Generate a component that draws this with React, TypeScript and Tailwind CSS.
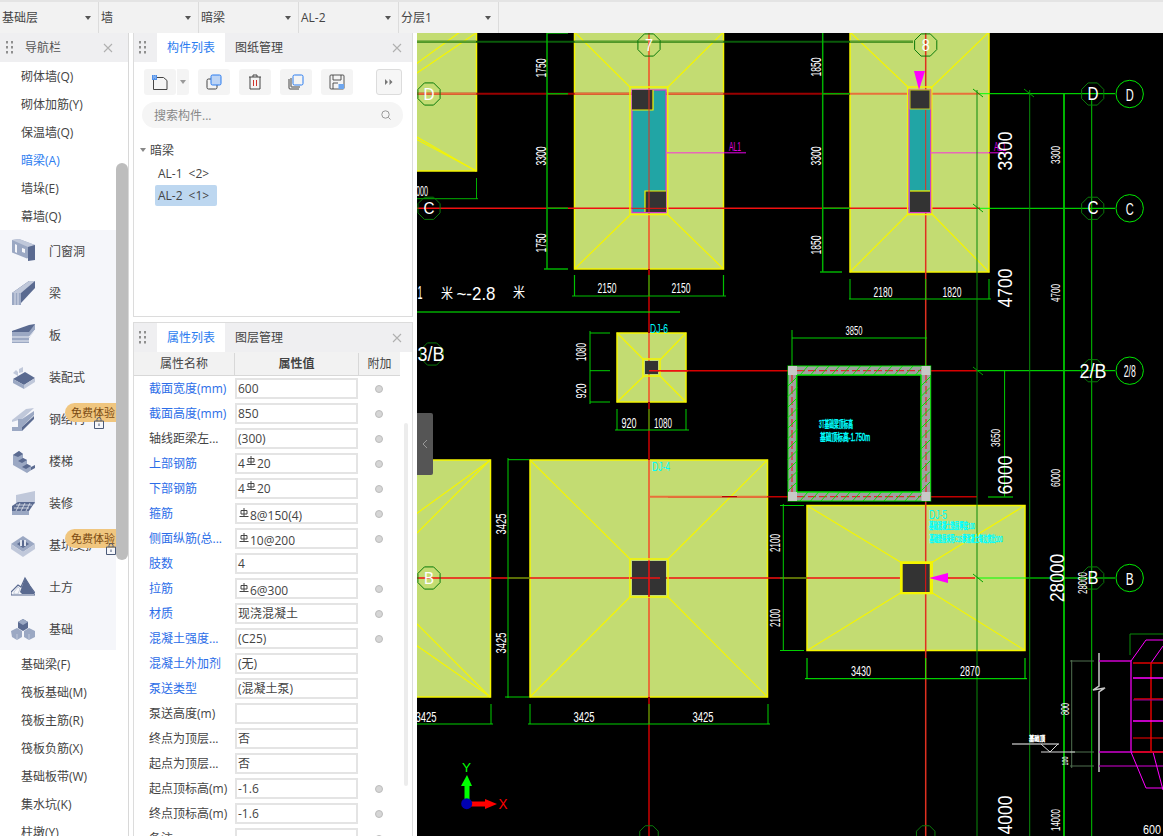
import type { ReactNode } from 'react'

const selects = ['基础层', '墙', '暗梁', 'AL-2', '分层1']

const topItems = ['砌体墙(Q)', '砌体加筋(Y)', '保温墙(Q)', '暗梁(A)', '墙垛(E)', '幕墙(Q)']
const groups = ['门窗洞', '梁', '板', '装配式', '钢结构', '楼梯', '装修', '基坑支护', '土方', '基础']
const bottomItems = ['基础梁(F)', '筏板基础(M)', '筏板主筋(R)', '筏板负筋(X)', '基础板带(W)', '集水坑(K)', '柱墩(Y)']

const rows = [
  { name: '截面宽度(mm)', value: '600', blue: true, dot: true },
  { name: '截面高度(mm)', value: '850', blue: true, dot: true },
  { name: '轴线距梁左...', value: '(300)', dot: true },
  { name: '上部钢筋', value: '4|20', blue: true, dot: true },
  { name: '下部钢筋', value: '4|20', blue: true, dot: true },
  { name: '箍筋', value: '|8@150(4)', blue: true, dot: true },
  { name: '侧面纵筋(总...', value: '|10@200', blue: true, dot: true },
  { name: '肢数', value: '4', blue: true },
  { name: '拉筋', value: '|6@300', blue: true, dot: true },
  { name: '材质', value: '现浇混凝土', blue: true, dot: true },
  { name: '混凝土强度...', value: '(C25)', blue: true, dot: true },
  { name: '混凝土外加剂', value: '(无)', blue: true },
  { name: '泵送类型', value: '(混凝土泵)', blue: true },
  { name: '泵送高度(m)', value: '' },
  { name: '终点为顶层...', value: '否' },
  { name: '起点为顶层...', value: '否' },
  { name: '起点顶标高(m)', value: '-1.6', dot: true },
  { name: '终点顶标高(m)', value: '-1.6', dot: true },
  { name: '备注', value: '', dot: true },
]

function Grip() {
  return (
    <svg width="8" height="14" viewBox="0 0 8 14" fill="#8f8f8f">
      {[0, 5, 10].map((y) => (
        <g key={y}>
          <rect x="0" y={y} width="2" height="2.5" />
          <rect x="5" y={y} width="2" height="2.5" />
        </g>
      ))}
    </svg>
  )
}

function Close() {
  return (
    <svg width="10" height="10" viewBox="0 0 10 10" stroke="#b0b0b0" strokeWidth="1.1">
      <path d="M1 1l8 8M9 1l-8 8" />
    </svg>
  )
}

function RebarMark() {
  return (
    <svg width="10" height="10" viewBox="0 0 10 10" fill="none" stroke="#444" strokeWidth="1" className="mb-[5px] mx-[1px] inline-block">
      <path d="M2 2.5h6v3.500h-6zM5 0v8.500M0.500 8.500h9" />
    </svg>
  )
}

function NavIcon({ name }: { name: string }) {
  const l = '#c0c8da'
  const m = '#9ba8c3'
  const d = '#5a6a90'
  const icons: Record<string, ReactNode> = {
    门窗洞: (
      <>
        <path d="M1 1l7-1 16 6v9l-8 4.500-15-6z" fill={m} />
        <path d="M1 1l7-1 16 6-7 2z" fill={l} />
        <path d="M17 8l7-2v15l-7 1z" fill={d} />
        <path d="M4 5l2 1v8l-2-1zM11 9l3 1v4l-3-1z" fill="#f5f6fa" />
      </>
    ),
    梁: (
      <>
        <path d="M1 12l17-12 6 0v7l-14 15H1z" fill={d} />
        <path d="M1 12l17-12 6 0-14 12z" fill={l} />
        <path d="M1 12h9v12H1z" fill={m} />
        <path d="M4 12v12M7 12v12" stroke="#f5f6fa" strokeWidth=".7" />
      </>
    ),
    板: (
      <>
        <path d="M1 8l18-4 5-3v6l-6 8v5H1z" fill={m} />
        <path d="M1 8L18 2l6-1-6 8H1z" fill={d} />
        <path d="M1 14h17M1 18h17M18 14l6-7M18 18l6-7" stroke="#f5f6fa" strokeWidth=".9" />
      </>
    ),
    装配式: (
      <>
        <path d="M2 8l3-3 2 2v4zM8 4l4-2v5l-4 1z" fill={l} />
        <path d="M2 14l12-7 10 6-11 7z" fill={d} />
        <path d="M2 14l11 6v4L2 18z" fill={m} />
        <path d="M13 20l11-7v4l-11 7z" fill={l} />
      </>
    ),
    钢结构: (
      <>
        <path d="M1 15l10-3 12-11-8 1L1 13z" fill={l} />
        <path d="M1 20h10v4H1z" fill={m} />
        <path d="M7 12l4 0 12-8v4L11 20H7z" fill={m} />
        <path d="M11 20L23 9v3L11 24z" fill={d} />
      </>
    ),
    楼梯: (
      <>
        <path d="M2 6l6-4 4 3v4l4 2v4l4 2v4l-4 3L2 16z" fill={m} />
        <path d="M8 2l4 3-5 3-5-2zM12 9l4 2-5 3-4-2zM16 15l4 2-5 3-4-2z" fill={d} />
        <path d="M15 24l9-5v-3l-4 2v3z" fill={d} />
      </>
    ),
    装修: (
      <>
        <path d="M5 4L24 0v13L5 15z" fill={l} />
        <path d="M1 15l6-4h17l-6 9H1z" fill={d} />
        <path d="M1 20h17v4H1z" fill={m} />
        <path d="M5 14h16M3 17h15M9 12l-4 8M14 12l-4 8M19 12l-4 8" stroke="#f5f6fa" strokeWidth=".7" />
      </>
    ),
    基坑支护: (
      <>
        <path d="M0 11L12 3l12 8-12 8z" fill={m} />
        <path d="M0 11v5l12 8v-5zM24 11v5l-12 8v-5z" fill={l} />
        <path d="M6 11l6-4 6 4-6 4z" fill={d} />
        <path d="M9 7h2v6H9zM13 7h2v6h-2z" fill="#dfe4ee" />
      </>
    ),
    土方: (
      <>
        <path d="M0 17l7-7 3 2 4-9 5 8 5 7v2H0z" fill="none" stroke={d} strokeWidth="1.200" />
        <path d="M9 17l5-14 5 8 4 6v2H11z" fill={d} />
        <path d="M3 17l4-5 2 2-2 5H3z" fill="#f5f6fa" stroke={m} strokeWidth=".5" />
      </>
    ),
    基础: (
      <>
        <path d="M7 5l5-3 5 3v6l-5 3-5-3z" fill={d} />
        <path d="M7 5l5 3 5-3-5-3z" fill={m} />
        <path d="M0 14l6-3 5 3v6l-5 3-5-3z" fill={m} />
        <path d="M13 14l5-3 6 3v6l-6 3-5-3z" fill={m} />
        <path d="M6 17v6M18 17v6" stroke={l} />
      </>
    ),
  }
  return (
    <svg width="24" height="24" viewBox="0 0 24 24" className="shrink-0">
      {icons[name]}
    </svg>
  )
}

function Badge({ top }: { top: number }) {
  return (
    <div className="absolute left-[65px] z-10 h-[19px] w-[51px] rounded-l-full bg-[#f0c67f] pl-[6px] text-[11px] leading-[19px] text-[#7a4a12]" style={{ top }}>
      <span className="whitespace-nowrap">免费体验</span>
    </div>
  )
}

function Lock({ left, top }: { left: number; top: number }) {
  return (
    <svg width="10" height="12" viewBox="0 0 10 12" fill="none" stroke="#4b5a78" className="absolute z-20" style={{ left, top }}>
      <path d="M3 4V2.500a2 2 0 014 0V4M.5 4h9v7.500h-9zM5 6.500v2.500" />
    </svg>
  )
}

function NavBar() {
  return (
    <aside className="relative h-[803px] w-[129px] shrink-0 overflow-hidden border-r border-[#d8d8d8] bg-white text-[12px] text-[#444]">
      <div className="flex h-[29px] items-center bg-[#efeff1] pl-[6px] pr-[15px]">
        <Grip />
        <span className="ml-[11px] flex-1 text-[#555]">导航栏</span>
        <Close />
      </div>
      <div className="pr-3">
        {topItems.map((t) => (
          <div key={t} className={`h-[28px] pl-[21px] leading-[30px] ${t === '暗梁(A)' ? 'text-[#2b7cf0]' : ''}`}>
            {t}
          </div>
        ))}
      </div>
      <div className="mr-3 bg-[#f5f6fa]">
        {groups.map((t) => (
          <div key={t} className="flex h-[42px] items-center pl-[11px]">
            <NavIcon name={t} />
            <span className="ml-[14px] whitespace-nowrap pt-[2px] text-[#444]">{t}</span>
          </div>
        ))}
      </div>
      <div className="pr-3">
        {bottomItems.map((t) => (
          <div key={t} className="h-[28px] pl-[21px] leading-[30px]">
            {t}
          </div>
        ))}
      </div>
      <div className="absolute left-[116px] top-[130px] h-[397px] w-3 rounded-full bg-[#bdbdbd]" />
      <Badge top={370} />
      <Lock left={94} top={384} />
      <Badge top={496} />
      <Lock left={106} top={510} />
    </aside>
  )
}

function PanelHead({ active, other }: { active: string; other: string }) {
  return (
    <div className="flex h-[29px] shrink-0 items-center bg-[#efeff1] text-[12px]">
      <div className="ml-[5px] w-[18px]">
        <Grip />
      </div>
      <div className="flex h-full w-[68px] items-center justify-center bg-white text-[#2b7cf0]">{active}</div>
      <div className="ml-[10px] flex-1 text-[#444]">{other}</div>
      <div className="mr-[10px]">
        <Close />
      </div>
    </div>
  )
}

function ToolButton({ children, w = 32 }: { children: ReactNode; w?: number }) {
  return (
    <div className="flex h-[26px] items-center justify-center rounded-[3px] bg-[#f4f4f4]" style={{ width: w }}>
      {children}
    </div>
  )
}

function ComponentList() {
  return (
    <section className="flex h-[284px] flex-col border border-t-0 border-[#dcdcdc] bg-white">
      <PanelHead active="构件列表" other="图纸管理" />
      <div className="mt-[7px] flex h-[26px] items-center pl-[10px] pr-[10px]">
        <ToolButton>
          <svg width="16" height="15" viewBox="0 0 16 15" fill="none">
            <path d="M1.500 2.500h10l3.500 3v9h-13.500z" stroke="#444" />
            <rect x="0" y="0" width="5" height="5" fill="#4f8fe8" />
            <path d="M1 1h1M3 1h1M2 2h1M1 3h1M3 3h1" stroke="#dbe8fb" strokeWidth=".7" />
          </svg>
        </ToolButton>
        <div className="ml-px flex h-[26px] w-3 items-center justify-center rounded-r-[3px] bg-[#f4f4f4]">
          <svg width="6" height="4" viewBox="0 0 6 4" fill="#999">
            <path d="M0 0h6L3 4z" />
          </svg>
        </div>
        <div className="ml-[9px]">
          <ToolButton>
            <svg width="16" height="16" viewBox="0 0 16 16" fill="none">
              <rect x="1" y="5" width="10" height="10" rx="1.500" stroke="#444" />
              <rect x="5" y="1" width="10" height="10" rx="1.500" fill="#bcd4f5" stroke="#2b7cf0" />
            </svg>
          </ToolButton>
        </div>
        <div className="ml-[9px]">
          <ToolButton>
            <svg width="14" height="16" viewBox="0 0 14 16" fill="none" stroke="#444">
              <path d="M1 3h12M5 3V1h4v2M2 3v12h10V3" />
              <path d="M5.500 6v6M8.500 6v6" stroke="#d0342c" />
            </svg>
          </ToolButton>
        </div>
        <div className="ml-[9px]">
          <ToolButton>
            <svg width="16" height="16" viewBox="0 0 16 16" fill="none">
              <path d="M1 5v9a1 1 0 001 1h9M3 4v8.500a.5.5 0 00.500.500H12" stroke="#444" />
              <rect x="5" y="1" width="10" height="10" rx="1.500" stroke="#2b7cf0" />
            </svg>
          </ToolButton>
        </div>
        <div className="ml-[9px]">
          <ToolButton>
            <svg width="16" height="16" viewBox="0 0 16 16" fill="none">
              <path d="M2 1h12a1 1 0 011 1v12a1 1 0 01-1 1H2a1 1 0 01-1-1V2a1 1 0 011-1zM4 1v5h8V1M4 15V9h5" stroke="#444" strokeWidth=".9" />
              <rect x="9.500" y="10" width="5.500" height="5" fill="#6ea6ee" />
            </svg>
          </ToolButton>
        </div>
        <div className="ml-auto flex h-[26px] w-[26px] items-center justify-center rounded-[3px] border border-[#dcdcdc] bg-[#f6f6f6]">
          <svg width="8" height="6" viewBox="0 0 8 6" fill="#777">
            <path d="M0 0l3 3-3 3zM4.500 0l3 3-3 3z" />
          </svg>
        </div>
      </div>
      <div className="ml-2 mr-[9px] mt-[7px] flex h-[26px] items-center rounded-full bg-[#f5f5f5] px-3 text-[12px] text-[#888]">
        <span className="flex-1 pt-[2px]">搜索构件...</span>
        <svg width="10" height="10" viewBox="0 0 10 10" fill="none" stroke="#999">
          <circle cx="4.500" cy="4.500" r="3.700" />
          <path d="M7.300 7.300L9.500 9.500" />
        </svg>
      </div>
      <div className="mt-[10px] flex h-[24px] items-center pl-[6px] text-[12px] text-[#444]">
        <svg width="6" height="4" viewBox="0 0 6 4" fill="#888" className="mr-1">
          <path d="M0 0h6L3 4z" />
        </svg>
        <span className="pt-[2px]">暗梁</span>
      </div>
      <div className="ml-[21px] flex h-[21px] w-[62px] items-center pl-[3px] pt-[2px] text-[12px] text-[#444]">
        AL-1<span className="ml-[6px]">&lt;2&gt;</span>
      </div>
      <div className="ml-[21px] mt-[2px] flex h-[21px] w-[62px] items-center rounded-[2px] bg-[#bdd7f0] pl-[3px] text-[12px] text-[#444]">
        AL-2<span className="ml-[6px]">&lt;1&gt;</span>
      </div>
    </section>
  )
}

function PropertyValue({ value }: { value: string }) {
  if (!value.includes('|')) return <>{value}</>
  const [a, b] = value.split('|')
  return (
    <span className="inline-flex items-center">
      {a}
      <RebarMark />
      {b}
    </span>
  )
}

function PropertyList() {
  return (
    <section className="mt-[5px] flex min-h-0 flex-1 flex-col overflow-hidden border border-b-0 border-[#dcdcdc] bg-white">
      <PanelHead active="属性列表" other="图层管理" />
      <div className="relative min-h-0 flex-1 text-[12px]">
        <div className="flex h-[24px] w-[266px] items-center border-b border-[#d8d8d8] bg-[#f2f2f2] pt-px text-[#444]">
          <div className="flex h-full w-[101px] items-center justify-center border-r border-[#d8d8d8]">属性名称</div>
          <div className="flex h-full w-[124px] items-center justify-center border-r border-[#d8d8d8] font-semibold">属性值</div>
          <div className="flex h-full flex-1 items-center justify-center">附加</div>
        </div>
        {rows.map((r) => (
          <div key={r.name} className="flex h-[25px] items-center">
            <div className={`w-[101px] whitespace-nowrap pl-[15px] ${r.blue ? 'text-[#2b6de8]' : 'text-[#444]'}`}>{r.name}</div>
            <div className="h-[21px] w-[123px] border-2 border-[#e4e4e4] pl-[1px] leading-[17px] text-[#444]">
              <PropertyValue value={r.value} />
            </div>
            {r.dot && <div className="ml-[17px] h-2 w-2 rounded-full border border-[#bcbcbc] bg-[#d6d6d6]" />}
          </div>
        ))}
        <div className="absolute left-[270px] top-[71px] h-[363px] w-1 rounded-full bg-[#ececec]" />
      </div>
    </section>
  )
}

const octagon = (cx: number, cy: number, r: number) =>
  Array.from({ length: 8 }, (_, i) => {
    const a = ((i + 0.5) * Math.PI) / 4
    return `${cx + r * Math.cos(a)},${cy + r * Math.sin(a)}`
  }).join(' ')

function L({ d, c = '#00e600', w = 1.5, dash }: { d: string; c?: string; w?: number; dash?: string }) {
  return <path d={d} stroke={c} strokeWidth={w} fill="none" strokeDasharray={dash} />
}

function T({ x, y, t, w, s = 15, rot, c = '#fff', b }: { x: number; y: number; t: string; w: number; s?: number; rot?: boolean; c?: string; b?: boolean }) {
  return (
    <text
      x={x}
      y={y}
      fill={c}
      stroke={b ? c : undefined}
      strokeWidth={b ? 0.5 : undefined}
      fontSize={s}
      fontFamily="'Liberation Sans','Noto Sans CJK SC',sans-serif"
      textAnchor="middle"
      dominantBaseline="central"
      textLength={w}
      lengthAdjust="spacingAndGlyphs"
      transform={rot ? `rotate(-90 ${x} ${y})` : undefined}
    >
      {t}
    </text>
  )
}

function Footing({ x1, y1, x2, y2, cx1, cy1, cx2, cy2 }: { x1: number; y1: number; x2: number; y2: number; cx1: number; cy1: number; cx2: number; cy2: number }) {
  return (
    <g>
      <rect x={x1} y={y1} width={x2 - x1} height={y2 - y1} fill="#c3dc72" stroke="#f5f500" strokeWidth="1.500" />
      <L c="#f5f500" w={1.2} d={`M${x1} ${y1}L${cx1} ${cy1}M${x2} ${y1}L${cx2} ${cy1}M${x1} ${y2}L${cx1} ${cy2}M${x2} ${y2}L${cx2} ${cy2}`} />
    </g>
  )
}

function Column({ x, y, w, h }: { x: number; y: number; w: number; h: number }) {
  return <rect x={x - 1} y={y - 1} width={w + 2} height={h + 2} fill="#333" stroke="#f5f500" strokeWidth="2" />
}

function WallColumn({ x1, x2, ox1, ox2, lead, leadEnd }: { x1: number; x2: number; ox1: number; ox2: number; lead: number; leadEnd: number }) {
  return (
    <g>
      <rect x={ox1} y={87} width={ox2 - ox1} height={127.500} fill="none" stroke="#f5f500" strokeWidth="1.500" />
      <rect x={x1} y={90} width={x2 - x1} height={122.500} fill="#21a5a5" stroke="#d838c8" strokeWidth="1.200" />
      <L c="#e868b8" d={`M${x2} 152.700H${lead}`} />
      <L c="#a000a0" d={`M${lead} 152.700H${leadEnd}`} />
    </g>
  )
}

function Canvas() {
  const hatchTop = Array.from({ length: 12 }, (_, i) => `M${800 + i * 10.500} 375l8-9M${800 + i * 10.500} 501l8-9`).join('')
  const hatchSide = Array.from({ length: 11 }, (_, i) => `M788 ${386 + i * 10.500}l9-9M921 ${386 + i * 10.500}l9-9`).join('')
  return (
    <main className="min-w-0 flex-1 bg-black">
      <svg width="746" height="803" viewBox="417 33 746 803" className="block">
        {/* footings */}
        <Footing x1={380} y1={20} x2={476.500} y2={171} cx1={380} cy1={90} cx2={380} cy2={120} />
        <Footing x1={574.500} y1={32} x2={723.500} y2={269} cx1={630} cy1={87} cx2={668} cy2={215} />
        <Footing x1={850} y1={32} x2={989} y2={272} cx1={908} cy1={87} cx2={932} cy2={214} />
        <Footing x1={617} y1={333} x2={686} y2={402} cx1={644} cy1={360} cx2={660} cy2={376} />
        <Footing x1={530} y1={460} x2={767.500} y2={697} cx1={631} cy1={560} cx2={667} cy2={596} />
        <Footing x1={380} y1={460} x2={490.500} y2={697} cx1={380} cy1={540} cx2={380} cy2={620} />
        <Footing x1={807} y1={505.500} x2={1025} y2={650.500} cx1={902} cy1={563} cx2={931} cy2={592} />
        <L c="#f5f500" w={1.2} d="M417 73L476 33M417 137L476 171" />
        <L c="#f5f500" w={1.2} d="M417 533L490 460M417 624L490 697" />

        {/* axis lines */}
        <L c="#0a5a0a" w={2} d="M417 41.700H913" />
        <L c="#5aa02c" w={2} d="M417 41.700H476M574.500 41.700H723.500M850 41.700H913" />
        <L c="#9a0000" w={2} d="M649 33V836" />
        <L c="#e8703a" w={2} d="M649 33V269M649 333V402M649 460V697" />
        <L c="#e03020" w={1.500} d="M925.700 33V836" />
        <L c="#9a0000" w={2} d="M417 93.700H850" />
        <L c="#e8703a" w={2} d="M417 93.700H476.500M574.500 93.700H723.500M850 93.700H980" />
        <L c="#f01010" w={1.500} d="M417 208.300H980" />
        <L c="#d80000" w={1.500} d="M649 370.700H977" />
        <L c="#c00000" w={1.500} d="M668 496.700H977" />
        <L c="#e8703a" w={2} d="M649 496.700H722M737 496.700H767.500" />
        <L c="#f01010" w={1.500} d="M417 578H975" />

        {/* wall columns */}
        <WallColumn x1={632} x2={666} ox1={630} ox2={667.700} lead={724} leadEnd={746} />
        <rect x={632} y={90} width={21} height={20} fill="#333" />
        <L c="#f5f500" w={1.2} d="M653 90V110H632" />
        <rect x={645} y={191} width={21} height={21} fill="#333" />
        <L c="#f5f500" w={1.2} d="M645 212V191H666" />
        <WallColumn x1={909} x2={930.700} ox1={907.700} ox2={931.700} lead={989} leadEnd={1010} />
        <rect x={910} y={90} width={20} height={19} fill="#333" stroke="#c8c820" />
        <rect x={910} y={191} width={20} height={21} fill="#333" />
        <L c="#f5f500" w={1.2} d="M910 191H930" />
        <L c="#e03020" w={1} d="M649 90V212M925.700 110V190" />
        <L c="#f01010" w={1} d="M632 208.300H666" />

        <rect x={643} y={359} width={17} height={17} fill="none" stroke="#f5f500" strokeWidth="1.500" />
        <rect x={645} y={361} width={13} height={13} fill="#333" />
        <L c="#f01010" d="M649 370.700H688" />
        <rect x={630} y={559} width={38} height={38} fill="none" stroke="#f5f500" strokeWidth="1.500" />
        <rect x={632} y={561} width={34} height={34} fill="#333" />
        <L c="#f01010" w={1.500} d="M630 578H660M649 561V597" />
        <rect x={900.700} y={562} width={31.500} height={31.500} fill="none" stroke="#f5f500" strokeWidth="1.500" />
        <Column x={902.700} y={564} w={27} h={28} />
        <L c="#f01010" w={1} d="M925.700 564V592" />

        {/* dimension lines */}
        <L w={1.500} c="#00b000" d="M547 33V269M547 93.700H568M547 208.300H568M544 269H568M547 33H568" />
        <L w={1.200} c="#00c000" d="M572 296H726M574.500 275V296M649 275V296M723.500 275V296" />
        <L c="#00ff00" w={1} d="M417 312H680" />
        <L w={1.500} c="#00b000" d="M822.700 33V272M822.700 93.700H850M822.700 208.300H850M820 272H842" />
        <L w={1} c="#00d000" d="M849 299H991M850 279V299M925.700 279V299M989 279V299" />
        <L c="#00ff00" w={1} d="M980 93.700H1115M980 208.300H1115" />
        <L c="#00ff00" w={1} d="M977 370.700H1115M977 578H1115" />
        <L c="#0a8a0a" w={1} d="M977 90V836M1029.700 90V836" />
        <L c="#00c800" w={1.800} d="M1064 94V836" />
        <L c="#00c800" w={1} d="M1091.700 100V836" />
        <L c="#00a000" w={1} d="M973 89l10 8M973 204l10 8M973 367l10 8M973 574l10 8M1024 89l10 8" />
        <L c="#00d000" w={1} d="M1004.600 370.700V497" />
        <L c="#00a000" w={1.500} d="M988 497H1013" />
        <L c="#00d000" w={1} d="M590 331V404M590 333H610M590 370.700H610M590 402H610" />
        <L c="#00d000" w={1} d="M615 430H689M617 409V430M649 409V430M686 409V430" />
        <L c="#00d000" w={1} d="M792 338H927M792 330V370M925.700 330V366" />
        <L c="#00d000" w={1} d="M508 458V698M508 459.700H529M508 578H530M505 697H529" />
        <L c="#00d000" w={1} d="M417 724H493M491 704V724M528 724H770M530 704V724M649 704V724M768 704V724" />
        <L c="#00d000" w={1} d="M783.300 504V651M780 505.500H804M780 578H807M780 650.500H804" />
        <L c="#00ff00" w={1} d="M805 678.700H1027M807 658V678.700M925.700 658V678.700M1025 658V678.700" />
        <L c="#00b000" d="M476.500 178V199M417 198.700H478" w={1} />

        {/* lift shaft */}
        <rect x={788} y={366} width={142.700} height={135} fill="#a0a0a0" />
        <rect x={796.700} y={375} width={124.300} height={117} fill="#000" stroke="#00e600" strokeWidth="1.500" />
        <rect x={788} y={366} width={142.700} height={135} fill="none" stroke="#00e600" strokeWidth="1" />
        <L c="#f01010" w={1} dash="8 3" d="M797 370.700H921M792 375V492M926 375V492M797 496.700H921" />
        <L c="#00e600" w={1} d={hatchTop} />
        <L c="#00e600" w={1} d={hatchSide} />
        {[
          [788, 366],
          [921.500, 366],
          [788, 492],
          [921.500, 492],
        ].map(([x, y]) => (
          <rect key={`${x}${y}`} x={x} y={y} width={9} height={9} fill="#c8c8c8" />
        ))}

        {/* grid bubbles */}
        {[
          [649, 45],
          [925.700, 45],
          [429, 94],
          [429, 208.300],
          [429, 578],
          [432, 354],
          [1092.700, 94],
          [1092.700, 208.300],
          [1092.700, 370.700],
          [1092.700, 578],
        ].map(([x, y]) => (
          <polygon key={`${x}-${y}`} points={octagon(x, y, 12)} fill="none" stroke="#0a7a0a" strokeWidth="1" />
        ))}
        {[94, 208.300, 370.700, 578].map((y) => (
          <circle key={y} cx={1129.700} cy={y} r={13.700} fill="#000" stroke="#00e600" strokeWidth="1" />
        ))}
        <polygon points={octagon(649, 835, 10)} fill="none" stroke="#0a7a0a" />
        <polygon points={octagon(925.700, 835, 10)} fill="none" stroke="#0a7a0a" />

        <T x={649} y={45} t="7" w={8} s={17} />
        <T x={925.700} y={45} t="8" w={8} s={17} />
        <T x={429} y={94} t="D" w={11} s={16} />
        <T x={429} y={208.300} t="C" w={11} s={16} />
        <T x={429} y={578} t="B" w={10} s={16} />
        <T x={431} y={354} t="3/B" w={27} s={20} />
        <T x={1093} y={94} t="D" w={11} s={18} />
        <T x={1093} y={208.300} t="C" w={11} s={18} />
        <T x={1093} y={370.700} t="2/B" w={27} s={20} />
        <T x={1093} y={578} t="B" w={11} s={18} />
        <T x={1129.700} y={95} t="D" w={8} s={17} />
        <T x={1129.700} y={209} t="C" w={8} s={17} />
        <T x={1129.700} y={371} t="2/8" w={12} s={17} />
        <T x={1129.700} y={579} t="B" w={8} s={17} />

        {/* dimension text */}
        <T x={540} y={68} t="1750" w={19} rot />
        <T x={540} y={156} t="3300" w={19} rot />
        <T x={540} y={243} t="1750" w={19} rot />
        <T x={607} y={287} t="2150" w={19} />
        <T x={681} y={287} t="2150" w={19} />
        <T x={422} y={190} t="000" w={12} />
        <T x={420} y={293} t="1" w={5} s={18} />
        <T x={447} y={293} t="米" w={12} s={14} />
        <T x={476} y={293} t="~-2.8" w={39} s={19} />
        <T x={519} y={292} t="米" w={12} s={14} />
        <T x={735} y={146} t="AL1" w={12} s={13} c="#e000e0" />
        <T x={1000} y={146} t="AL1" w={12} s={13} c="#e000e0" />
        <T x={815} y={67} t="1850" w={19} rot />
        <T x={815} y={156} t="3300" w={19} rot />
        <T x={815} y={245} t="1850" w={19} rot />
        <T x={883} y={291} t="2180" w={19} />
        <T x={952} y={291} t="1820" w={19} />
        <T x={1004} y={151} t="3300" w={39} s={21} rot />
        <T x={1004} y={288} t="4700" w={39} s={21} rot />
        <T x={1004} y={475} t="6000" w={39} s={21} rot />
        <T x={1004} y={815} t="4000" w={39} s={21} rot />
        <T x={1056} y={155} t="3300" w={18} s={12} rot />
        <T x={1056} y={293} t="4700" w={18} s={12} rot />
        <T x={1056} y={478} t="6000" w={18} s={12} rot />
        <T x={1056} y={820} t="14000" w={22} s={12} rot />
        <T x={996} y={438} t="3650" w={18} s={12} rot />
        <T x={1056} y={578} t="28000" w={48} s={21} rot />
        <T x={1083} y={583} t="28000" w={22} s={12} rot />
        <T x={854} y={330} t="3850" w={17} s={13} />
        <T x={659} y={329} t="DJ-6" w={18} s={12} c="#00ffff" />
        <T x={581} y={352} t="1080" w={18} s={14} rot />
        <T x={581} y={391} t="920" w={15} s={14} rot />
        <T x={629} y={422} t="920" w={15} />
        <T x={663} y={422} t="1080" w={18} />
        <T x={661} y={467} t="DJ-4" w={18} s={12} c="#00ffff" />
        <T x={500} y={524} t="3425" w={21} rot />
        <T x={500} y={643} t="3425" w={21} rot />
        <T x={775} y={543} t="2100" w={18} s={14} rot />
        <T x={775} y={618} t="2100" w={18} s={14} rot />
        <T x={426} y={716} t="3425" w={21} />
        <T x={584} y={716} t="3425" w={21} />
        <T x={703} y={716} t="3425" w={21} />
        <T x={861} y={670} t="3430" w={20} />
        <T x={970} y={670} t="2870" w={20} />
        <T x={836} y={424} t="3T基础梁顶标高" w={34} s={10} c="#00ffff" b />
        <T x={845} y={437} t="基础顶标高-1.750m" w={50} s={10} c="#00ffff" b />
        <T x={938} y={515} t="DJ-5" w={18} s={12} c="#00ffff" />
        <T x={952} y={526} t="基础混凝土垫层厚度100" w={46} s={9} c="#00ffff" b />
        <T x={966} y={539} t="基础垫层采用C15素混凝土每边宽出100" w={73} s={9} c="#00ffff" b />

        {/* right detail */}
        <L c="#c8c8c8" w={1.500} d="M1099 653V686l-6 4 12-2-6 4V772" />
        <L c="#d000d0" d="M1099 661H1131M1131 661V752M1099 752H1163" />
        <L c="#900090" d="M1099 766H1163" />
        <L c="#ff00ff" w={1} d="M1146 640H1163M1146 640L1131 661M1163 646L1151 663M1131 752L1146 788H1163M1153 752L1163 790" />
        <L c="#e00000" d="M1133 663H1163M1133 752H1163M1151 663V752M1134 699H1163" />
        <L c="#ff00ff" d="M1133 678H1163M1133 721H1163" />
        <L c="#ff0000" d="M1133 738H1163" w={1} />
        <L c="#9000a0" d="M1133 700H1163" w={1} />
        <L c="#507050" w={1} d="M1071.700 660V768M1070 661H1094M1070 752H1094M1070 766H1094" />
        <T x={1065} y={709} t="800" w={12} s={10} rot />
        <T x={1065} y={761} t="100" w={9} s={9} rot />
        <L c="#a8a8a8" w={1.500} d="M1012 744H1059" />
        <L c="#d8d8d8" w={1} d="M1041 744L1050 752L1058 744M1041 752H1075" />
        <T x={1037} y={738} t="基础顶" w={16} s={7} b />
        <L c="#0a8a0a" w={1} d="M1130 634H1163M1130 634V655" />
        <T x={1152} y={829} t="600" w={18} s={13} />

        {/* markers */}
        <polygon points="914,71 925,71 919,90" fill="#ff00ff" />
        <polygon points="929,578 948,573 948,583" fill="#ff00ff" />

        {/* axes */}
        <rect x={464.500} y={782} width={5} height={22} fill="#00ff00" />
        <polygon points="461,786 467,775 472,786" fill="#00ff00" />
        <rect x={467} y={801.500} width={18} height={5} fill="#ff0000" />
        <polygon points="485,799 497,804 485,809" fill="#ff0000" />
        <circle cx={466.700} cy={803.700} r={5.500} fill="#0000b0" />
        <T x={466.500} y={767} t="Y" w={9} s={13} c="#00ff00" />
        <T x={503} y={804} t="X" w={9} s={14} c="#ff0000" />
      </svg>
    </main>
  )
}

export default function App() {
  return (
    <div className="relative flex h-[836px] w-[1163px] flex-col overflow-hidden bg-white font-['Open_Sans','Noto_Sans_CJK_SC',sans-serif]">
      <header className="flex h-[33px] shrink-0 border-t-2 border-[#e4e4e4] bg-[#f2f2f2] text-[12px] text-[#444]">
        {selects.map((s, i) => (
          <div key={s} className={`relative flex items-center border-r border-[#dcdcdc] pl-[2px] ${i === 0 ? 'w-[99px]' : 'w-[100px]'}`}>
            {s}
            <svg width="6" height="4" viewBox="0 0 6 4" fill="#555" className="absolute right-[7px] top-[14px]">
              <path d="M0 0h6L3 4z" />
            </svg>
          </div>
        ))}
      </header>
      <div className="flex min-h-0 flex-1">
        <NavBar />
        <div className="ml-1 flex h-full w-[280px] shrink-0 flex-col">
          <ComponentList />
          <PropertyList />
        </div>
        <div className="w-1 shrink-0" />
        <Canvas />
      </div>
      <div className="absolute left-[417px] top-[413px] flex h-[62px] w-4 items-center justify-center rounded-r-[2px] bg-[#555]">
        <svg width="6" height="10" viewBox="0 0 6 10" fill="none" stroke="#999">
          <path d="M5 1L1 5l4 4" />
        </svg>
      </div>
    </div>
  )
}
